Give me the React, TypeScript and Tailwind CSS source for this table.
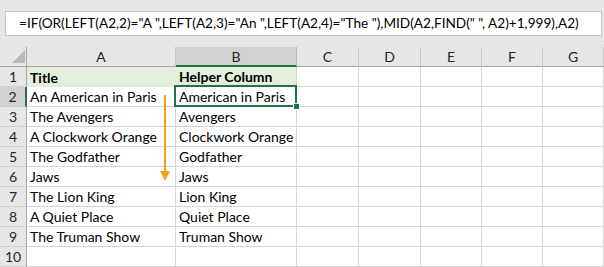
import React from "react";

const FORMULA =
  '=IF(OR(LEFT(A2,2)="A ",LEFT(A2,3)="An ",LEFT(A2,4)="The "),MID(A2,FIND(" ", A2)+1,999),A2)';

const ROWS: [string, string][] = [
  ["Title", "Helper Column"],
  ["An American in Paris", "American in Paris"],
  ["The Avengers", "Avengers"],
  ["A Clockwork Orange", "Clockwork Orange"],
  ["The Godfather", "Godfather"],
  ["Jaws", "Jaws"],
  ["The Lion King", "Lion King"],
  ["A Quiet Place", "Quiet Place"],
  ["The Truman Show", "Truman Show"],
  ["", ""],
];

const COLS = ["A", "B", "C", "D", "E", "F", "G"];

function DownArrow() {
  return (
    <svg
      className="absolute left-[158px] top-[94px]"
      width="14"
      height="90"
      viewBox="0 0 14 90"
      aria-hidden
    >
      <path d="M7 1v78" stroke="#f5a11c" strokeWidth="2" />
      <path d="M2 77h10l-5 10z" fill="#f5a11c" />
    </svg>
  );
}

export default function App() {
  return (
    <div className="relative h-[267px] w-[604px] overflow-hidden bg-[#e6e6e6] font-['Lato',sans-serif] text-[14px] text-black">
      {/* formula bar */}
      <div className="h-[47px] pl-[5px] pr-[2px] pt-[11px]">
        <div className="flex h-[25px] items-center border border-[#c6c6c6] bg-white pl-[13px] text-[13.6px] whitespace-pre">
          {FORMULA}
        </div>
      </div>

      {/* sheet grid */}
      <div className="grid grid-cols-[27px_149px_121px_62px_62px_61px_61px_1fr] bg-white whitespace-nowrap">
        <div className="relative h-[20px] border-b border-r border-[#a6a6a6] bg-[#e6e6e6]">
          <div className="absolute bottom-[3px] right-[1px] h-0 w-0 border-b-[13px] border-l-[13px] border-b-[#b9b9b9] border-l-transparent" />
        </div>
        {COLS.map((c) => (
          <div
            key={c}
            className={
              c === "B"
                ? "flex h-[20px] items-center justify-center border-b-2 border-r border-b-[#217346] border-r-[#b8b8b8] bg-[#d2d2d2] text-[#262626]"
                : "flex h-[20px] items-center justify-center border-b border-r border-b-[#a6a6a6] border-r-[#c8c8c8] bg-[#e6e6e6] text-[#262626]"
            }
          >
            {c}
          </div>
        ))}

        {ROWS.map(([a, b], i) => {
          const n = i + 1;
          const head = n === 1;
          return (
            <React.Fragment key={n}>
              <div
                className={
                  n === 2
                    ? "flex h-[20px] items-center justify-center border-b border-r-2 border-b-[#c8c8c8] border-r-[#217346] bg-[#d2d2d2] text-[#262626]"
                    : "flex h-[20px] items-center justify-center border-b border-r border-b-[#d0d0d0] border-r-[#a6a6a6] bg-[#e6e6e6] text-[#262626]"
                }
              >
                {n}
              </div>
              <div
                className={
                  head
                    ? "flex h-[20px] items-center bg-[#e2efda] pl-[3px] font-bold"
                    : "flex h-[20px] items-center border-b border-r border-[#d4d4d4] pl-[3px]"
                }
              >
                {a}
              </div>
              <div
                className={
                  head
                    ? "flex h-[20px] items-center border-b border-r border-[#d4d4d4] bg-[#e2efda] pl-[3px] font-bold"
                    : "flex h-[20px] items-center border-b border-r border-[#d4d4d4] pl-[3px]"
                }
              >
                {b}
              </div>
              {COLS.slice(2).map((c) => (
                <div key={c} className="h-[20px] border-b border-r border-[#d4d4d4]" />
              ))}
            </React.Fragment>
          );
        })}
      </div>

      {/* active cell B2 */}
      <div className="absolute left-[174px] top-[85px] h-[22px] w-[123px] border-2 border-[#217346]" />
      <div className="absolute left-[293px] top-[103px] h-[7px] w-[7px] border border-white bg-[#217346]" />

      <DownArrow />
    </div>
  );
}
